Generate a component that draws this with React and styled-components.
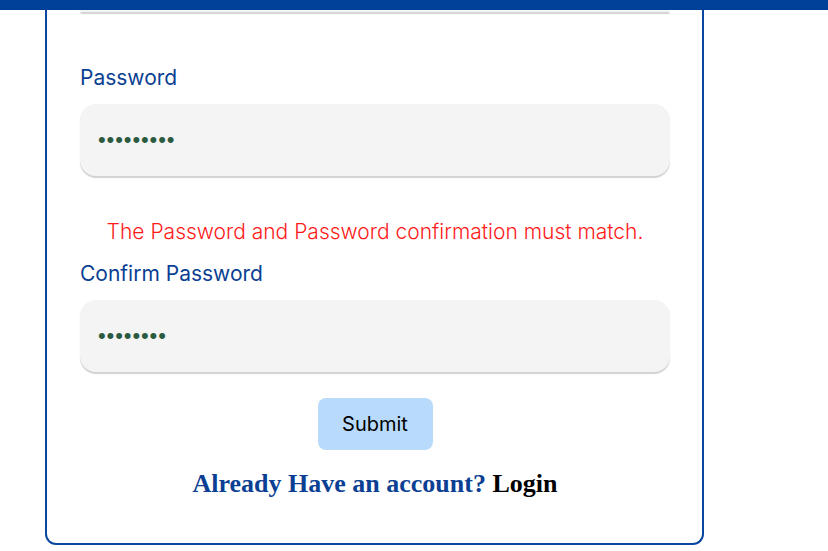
import React from "react";
import styled, { createGlobalStyle } from "styled-components";

const GlobalStyle = createGlobalStyle`
  html, body {
    margin: 0;
    padding: 0;
    background: #ffffff;
    font-family: Inter, "Liberation Sans", sans-serif;
  }
`;

const TopBar = styled.div`
  height: 10px;
  background: #02419a;
`;

const Card = styled.form`
  box-sizing: border-box;
  width: 659px;
  margin-left: 45px;
  padding: 0 32px 0 33px;
  border: 2px solid #0a47a1;
  border-top: none;
  border-radius: 0 0 11px 11px;
  height: 535px;
  display: flex;
  flex-direction: column;
`;

const InputTail = styled.div`
  height: 2px;
  background: #f3f3f3;
  border-radius: 0 0 16px 16px;
  box-shadow: 0 2px 1px #d2d2d2;
`;

const Label = styled.label`
  color: #0b3f93;
  font-size: 21px;
  line-height: 28px;
  margin-top: ${(p) => p.$top}px;
`;

const Field = styled.input`
  box-sizing: border-box;
  width: 100%;
  height: 72px;
  margin-top: 12px;
  padding: 0 18px;
  border: none;
  outline: none;
  border-radius: 16px;
  background: #f4f4f4;
  box-shadow: 0 2px 1px #d2d2d2;
  color: #2b5a40;
  font-family: "Liberation Sans", sans-serif;
  font-size: 22px;
  letter-spacing: 0.9px;
`;

const ErrorText = styled.p`
  margin: 42px 0 0;
  text-align: center;
  color: #ff1a1a;
  font-size: 21px;
  font-weight: 300;
  line-height: 28px;
`;

const SubmitButton = styled.button`
  align-self: center;
  width: 115px;
  height: 52px;
  margin-top: 26px;
  border: none;
  border-radius: 8px;
  background: #b8dbfb;
  color: #000;
  font-family: inherit;
  font-size: 20px;
`;

const Footer = styled.p`
  margin: 18px 0 0;
  text-align: center;
  font-family: "Liberation Serif", serif;
  font-weight: 700;
  font-size: 26px;
  line-height: 32px;
  color: #0b3f93;
`;

const LoginLink = styled.a`
  color: #000;
  text-decoration: none;
`;

export default function App() {
  return (
    <>
      <GlobalStyle />
      <TopBar />
      <Card onSubmit={(e) => e.preventDefault()}>
        <InputTail />
        <Label $top={52}>Password</Label>
        <Field type="password" defaultValue="123456789" />
        <ErrorText>The Password and Password confirmation must match.</ErrorText>
        <Label $top={14}>Confirm Password</Label>
        <Field type="password" defaultValue="12345678" />
        <SubmitButton type="submit">Submit</SubmitButton>
        <Footer>
          Already Have an account? <LoginLink href="#">Login</LoginLink>
        </Footer>
      </Card>
    </>
  );
}
